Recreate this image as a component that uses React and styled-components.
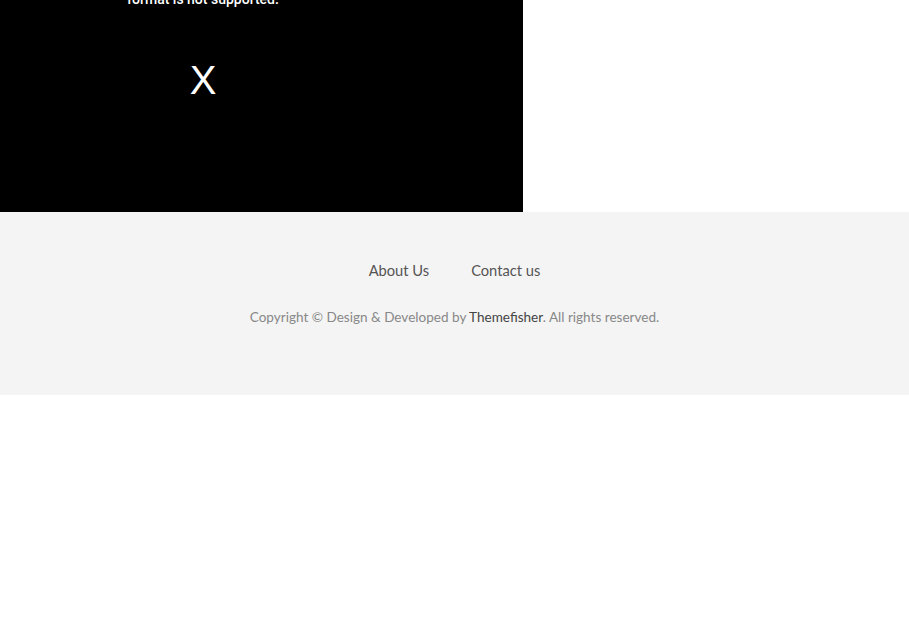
import React from 'react';
import styled, { createGlobalStyle } from 'styled-components';

const GlobalStyle = createGlobalStyle`
  body {
    margin: 0;
    background: #fff;
    font-family: Lato, "Open Sans", sans-serif;
  }
`;

const VideoBox = styled.div`
  width: 523px;
  height: 212px;
  background: #000;
  overflow: hidden;
  display: flex;
  flex-direction: column;
  align-items: center;
  padding-right: 117px;
  box-sizing: border-box;
`;

const Message = styled.div`
  margin-top: -9px;
  color: #fff;
  font-family: Roboto, "Liberation Sans", sans-serif;
  font-size: 14px;
  font-weight: 500;
  line-height: 16px;
`;

const Close = styled.div`
  margin-top: 50px;
  color: #fff;
  font-family: "Liberation Sans", Arial, sans-serif;
  font-size: 40px;
  line-height: 46px;
`;

const Footer = styled.footer`
  background: #f4f4f4;
  height: 183px;
  padding-top: 48px;
  box-sizing: border-box;
  text-align: center;
`;

const Links = styled.ul`
  list-style: none;
  margin: 0;
  padding: 0;
  display: flex;
  justify-content: center;
  gap: 42px;
`;

const LinkItem = styled.li`
  font-size: 14.7px;
  line-height: 20px;
  color: #555;
`;

const Copy = styled.p`
  margin: 27px 0 0;
  font-size: 13.55px;
  line-height: 20px;
  color: #888;
`;

const Brand = styled.span`
  color: #444;
`;

export default function App() {
  return (
    <>
      <GlobalStyle />
      <VideoBox>
        <Message>format is not supported.</Message>
        <Close>X</Close>
      </VideoBox>
      <Footer>
        <Links>
          <LinkItem>About Us</LinkItem>
          <LinkItem>Contact us</LinkItem>
        </Links>
        <Copy>
          Copyright © Design &amp; Developed by <Brand>Themefisher</Brand>. All rights reserved.
        </Copy>
      </Footer>
    </>
  );
}
